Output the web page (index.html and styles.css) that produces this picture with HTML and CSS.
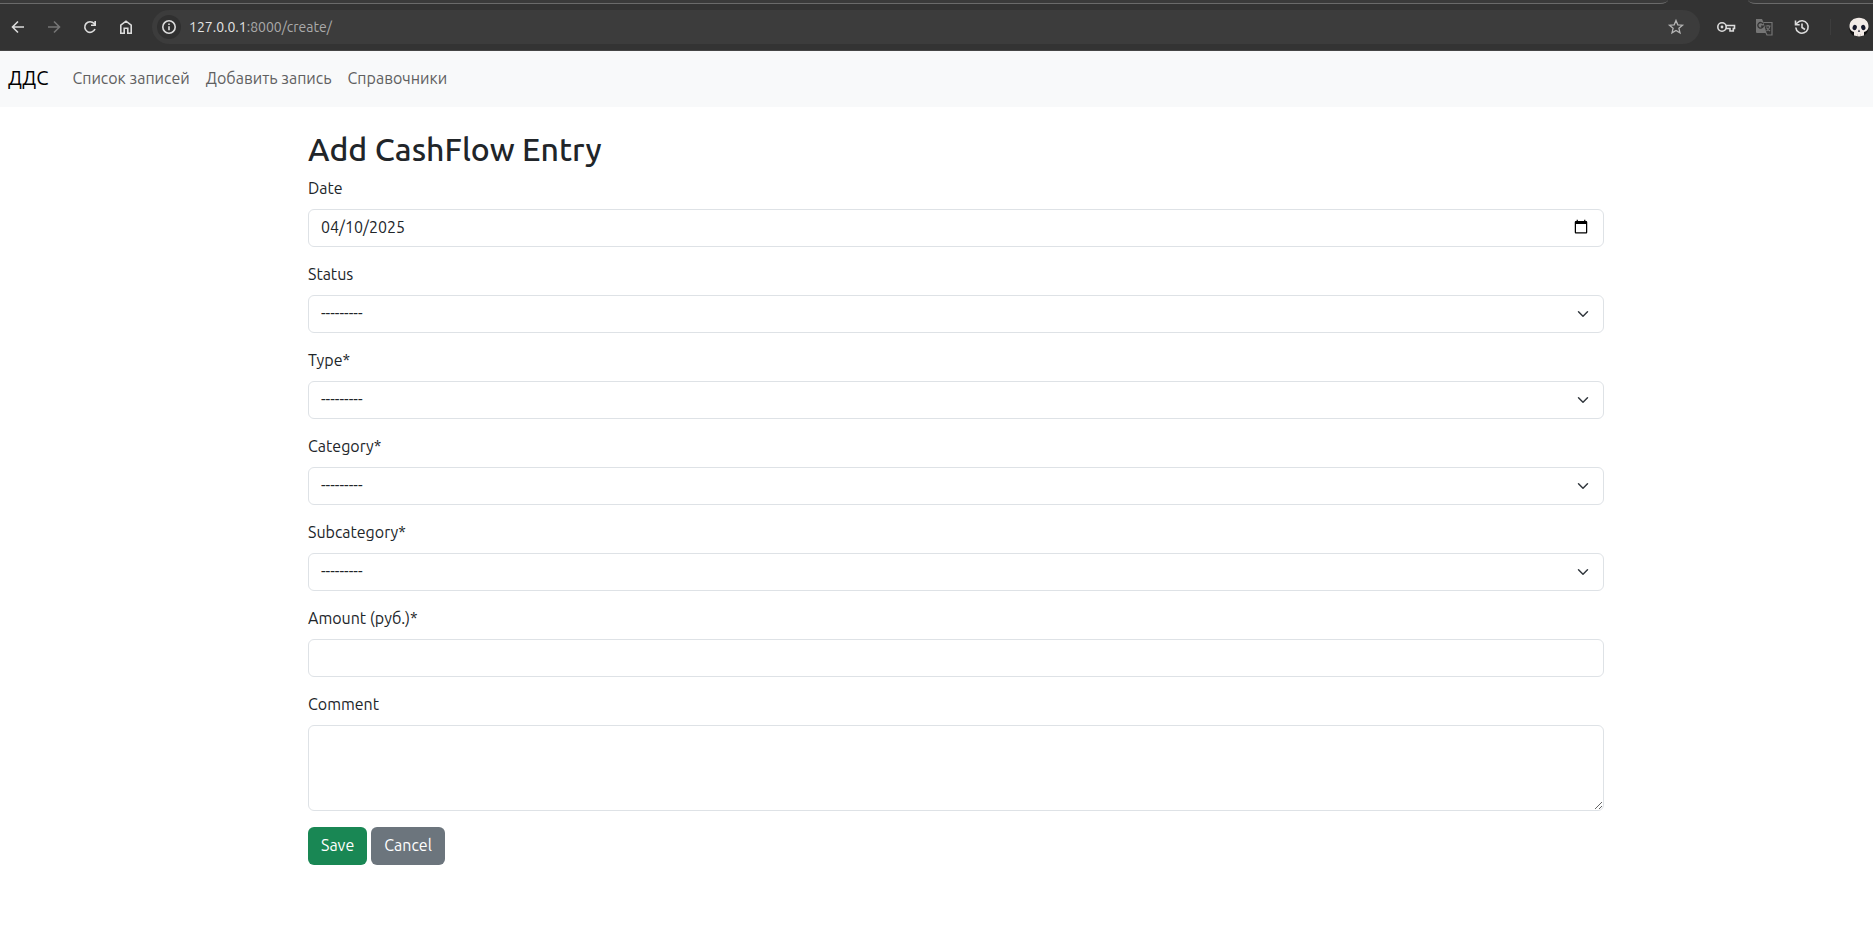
FILE: index.html
```html
<!DOCTYPE html>
<html lang="ru">
<head>
<meta charset="utf-8">
<title>Add CashFlow Entry</title>
<link rel="stylesheet" href="styles.css">
</head>
<body>
<header class="browser">
  <div class="tabs"><span class="tab-edge tab-edge-main"></span><span class="tab-edge tab-edge-end"></span></div>
  <div class="toolbar">
    <div class="controls">
      <button class="icon-btn" type="button" aria-label="Back"><svg viewBox="0 0 20 20"><path d="M16 10H5M10 4.5L4.5 10l5.5 5.5"/></svg></button>
      <button class="icon-btn dim" type="button" aria-label="Forward"><svg viewBox="0 0 20 20"><path d="M4 10h11M10 4.5l5.5 5.5-5.5 5.5"/></svg></button>
      <button class="icon-btn" type="button" aria-label="Reload"><svg viewBox="0 0 20 20"><path d="M15 12a5.3 5.3 0 1 1-.9-5.4L15.300 8M15.200 4v4.300H11"/></svg></button>
      <button class="icon-btn" type="button" aria-label="Home"><svg viewBox="0 0 20 20"><path d="M4.800 8.200L10 4.200l5.200 4v8h-3.400v-5H8.200v5H4.800z"/></svg></button>
    </div>
    <div class="address">
      <button class="info" type="button" aria-label="Site information"><svg viewBox="0 0 20 20"><circle cx="10" cy="10" r="6.200"/><path d="M10 9.200v4M10 6.500v1.500"/></svg></button>
      <div class="url"><span class="host">127.0.0.1</span>:8000/create/</div>
      <button class="icon-btn star" type="button" aria-label="Bookmark"><svg viewBox="0 0 20 20"><path d="M10 3.500l1.800 4.300 4.700.4-3.600 3.100 1.100 4.600-4-2.500-4 2.500 1.100-4.600-3.600-3.100 4.700-.4z"/></svg></button>
    </div>
    <div class="actions">
      <button class="icon-btn" type="button" aria-label="Passwords"><svg viewBox="0 0 20 20"><circle cx="6" cy="10" r="4.200"/><circle class="solid" cx="6" cy="10" r="1.400"/><path d="M10 8.500h8.500v3h-1.200v2.500h-3.300v-2.500H10"/></svg></button>
      <button class="icon-btn translate" type="button" aria-label="Translate"><svg viewBox="0 0 20 20"><path class="solid" d="M2 2h6l1.500 3.500L12.500 16H3a1 1 0 0 1-1-1z"/><path class="cut" d="M9 6.800a2.800 2.800 0 1 0 .3 2.400H7"/><path class="thin" d="M9.500 5.500H18v12.500h-5l-1-2M11.500 9h5M14 8v1M16 9c-.5 2.500-2 4-3.500 5M12.500 10.500c.8 1.600 2 2.600 3.600 3.600"/></svg></button>
      <button class="icon-btn" type="button" aria-label="History"><svg viewBox="0 0 20 20"><path d="M3.800 10.500a6.200 6.200 0 1 0 1.600-4.700L3.700 7.400M3.500 3.500v4.200h4.200M10 6.500v4l3 2"/></svg></button>
      <span class="divider"></span>
      <button class="icon-btn profile" type="button" aria-label="Profile"><svg viewBox="0 0 20 20"><path fill="#111" d="M0 11h20l-2 5-3 2.500H4L1.500 16z"/><path fill="#f2ebe7" d="M10 .8c-5.600 0-9.500 3.500-9.500 8.500 0 3.300 1.600 5 4.500 5.800v3.500q5 1.600 10 0v-3.500c2.900-.8 4.500-2.500 4.500-5.800 0-5-3.900-8.500-9.500-8.500z"/><ellipse fill="#15182b" cx="5.700" cy="10.500" rx="2.100" ry="2.700" transform="rotate(18 5.700 10.500)"/><ellipse fill="#15182b" cx="14.300" cy="10.500" rx="2.100" ry="2.700" transform="rotate(-18 14.300 10.500)"/><path fill="#15182b" d="M10 12.500l1.200 2.200H8.800z"/><path stroke="#c8bdb9" stroke-width=".6" d="M8.500 17v2M11.500 17v2"/></svg></button>
    </div>
  </div>
</header>

<nav class="navbar">
  <a class="brand" href="#">ДДС</a>
  <a class="nav-link" href="#">Список записей</a>
  <a class="nav-link" href="#">Добавить запись</a>
  <a class="nav-link" href="#">Справочники</a>
</nav>

<main class="page">
  <div class="container">
    <h2 class="title">Add CashFlow Entry</h2>
    <form class="form">
      <div class="field"><label for="date">Date</label><input class="control" type="date" id="date" value="2025-04-10"></div>
      <div class="field"><label for="status">Status</label><select class="control select" id="status"><option>---------</option></select></div>
      <div class="field"><label for="type">Type*</label><select class="control select" id="type"><option>---------</option></select></div>
      <div class="field"><label for="category">Category*</label><select class="control select" id="category"><option>---------</option></select></div>
      <div class="field"><label for="subcategory">Subcategory*</label><select class="control select" id="subcategory"><option>---------</option></select></div>
      <div class="field"><label for="amount">Amount (руб.)*</label><input class="control" type="text" inputmode="decimal" id="amount"></div>
      <div class="field"><label for="comment">Comment</label><textarea class="control" id="comment" rows="3"></textarea></div>
      <div class="buttons"><button class="btn save" type="submit">Save</button><a class="btn cancel" href="#">Cancel</a></div>
    </form>
  </div>
</main>
</body>
</html>
```
FILE: styles.css
```css
* { box-sizing: border-box; }
body {
  margin: 0;
  background: #fff;
  color: #212529;
  font: 16px/22px "Ubuntu", "Noto Sans", sans-serif;
}
button, input, select, textarea { font: inherit; color: inherit; }
a { text-decoration: none; }

/* Browser toolbar */
.browser { background: #333; border-bottom: 1px solid #454545; }
.tabs { display: flex; gap: 80px; height: 4px; }
.tab-edge { background: #3a3a3a; border-bottom: 1px solid #6a6a6a; }
.tab-edge-main { flex: 1; border-bottom-right-radius: 8px 4px; }
.tab-edge-end { width: 125px; border-bottom-left-radius: 8px 4px; }
.toolbar { display: flex; align-items: center; height: 46px; padding: 0 4px 0 8px; }
.controls { display: flex; gap: 16px; margin-right: 16px; }
.icon-btn, .info {
  display: flex;
  align-items: center;
  justify-content: center;
  padding: 0;
  border: 0;
  background: none;
  color: #dcdcdc;
}
.icon-btn { width: 20px; height: 20px; }
.icon-btn svg, .info svg {
  width: 20px;
  height: 20px;
  fill: none;
  stroke: currentColor;
  stroke-width: 1.6;
}
.icon-btn.dim { color: #757575; }
.address {
  flex: 1;
  display: flex;
  align-items: center;
  height: 34px;
  padding: 0 14px 0 5px;
  border-radius: 17px;
  background: #3c3c3c;
}
.info { width: 24px; height: 24px; border-radius: 12px; background: #303030; }
.url { flex: 1; margin-left: 8px; color: #aaa; font-size: 14px; line-height: 20px; }
.host { color: #e3e3e3; }
.icon-btn.star { color: #b5b5b5; }
.star svg { stroke-width: 1.3; }
.actions { display: flex; align-items: center; gap: 18px; margin-left: 16px; }
.icon-btn.translate { color: #757575; }
.actions .solid { fill: currentColor; stroke: none; }
.actions .cut { stroke: #333; stroke-width: 1.3; }
.actions .thin { stroke-width: 1.2; }
.divider { width: 1px; height: 16px; background: #3d3d3d; }
.profile svg { stroke: none; }

/* Site navigation */
.navbar {
  display: flex;
  align-items: center;
  min-height: 56px;
  padding: 7px 8px 9px;
  background: #f8f9fa;
}
.brand { margin-right: 16px; color: #000; font-size: 20px; line-height: 30px; }
.nav-link { padding: 8px; color: #5f6061; }

/* Entry form */
.page { padding: 24px 0 24px 39px; }
.container { max-width: 1320px; margin: 0 auto; padding: 0 12px; }
.title { margin: 0 0 10px; font-size: 32px; font-weight: 500; line-height: 36px; }
.form { display: flex; flex-direction: column; gap: 16px; }
.field { display: flex; flex-direction: column; gap: 10px; }
.control {
  width: 100%;
  min-height: 38px;
  padding: 5px 12px 7px;
  border: 1px solid #dee2e6;
  border-radius: 6px;
  background: #fff;
  line-height: 24px;
}
input.control { height: 38px; }
.control::-webkit-datetime-edit { display: block; padding: 0; }
.control::-webkit-datetime-edit-fields-wrapper,
.control::-webkit-datetime-edit-month-field,
.control::-webkit-datetime-edit-day-field,
.control::-webkit-datetime-edit-year-field { padding: 0; }
textarea.control { display: block; resize: vertical; }
.select {
  appearance: none;
  background: #fff url("data:image/svg+xml,%3Csvg xmlns='http://www.w3.org/2000/svg' viewBox='0 0 16 16'%3E%3Cpath fill='none' stroke='%23343a40' stroke-linecap='round' stroke-linejoin='round' stroke-width='2' d='m2 5 6 6 6-6'/%3E%3C/svg%3E") no-repeat right 12px center / 16px 12px;
}
.buttons { display: flex; gap: 4px; }
.btn {
  padding: 5px 12px 7px;
  border: 1px solid transparent;
  border-radius: 6px;
  color: #fff;
  line-height: 24px;
}
.save { background: #198754; }
.cancel { background: #6c757d; }
```
